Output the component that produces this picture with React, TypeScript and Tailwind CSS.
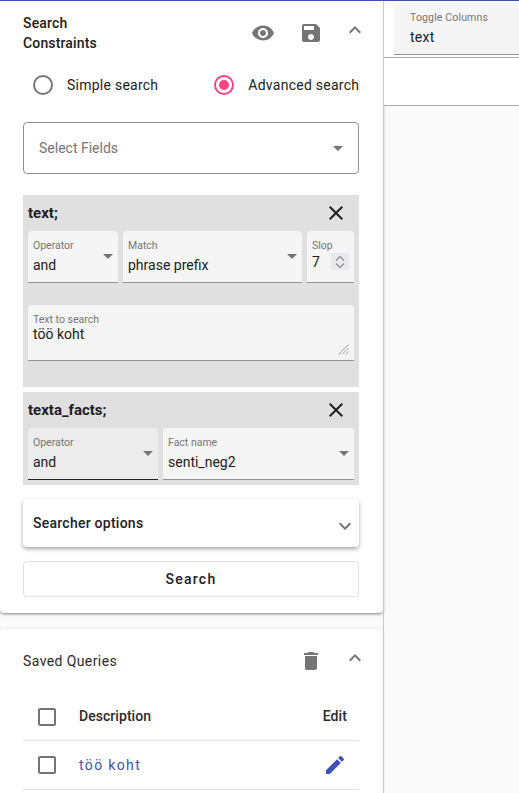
const P = {
  eye: "M12 4.5C7 4.5 2.73 7.61 1 12c1.73 4.39 6 7.5 11 7.5s9.27-3.11 11-7.5c-1.73-4.39-6-7.5-11-7.5zM12 17c-2.76 0-5-2.24-5-5s2.24-5 5-5 5 2.24 5 5-2.24 5-5 5zm0-8c-1.66 0-3 1.34-3 3s1.34 3 3 3 3-1.34 3-3-1.34-3-3-3z",
  save: "M17 3H5c-1.11 0-2 .9-2 2v14c0 1.1.89 2 2 2h14c1.1 0 2-.9 2-2V7l-4-4zm-5 16c-1.66 0-3-1.34-3-3s1.34-3 3-3 3 1.34 3 3-1.34 3-3 3zm3-10H5V5h10v4z",
  less: "M12 8l-6 6 1.41 1.41L12 10.83l4.59 4.58L18 14z",
  more: "M16.59 8.59L12 13.17 7.41 8.59 6 10l6 6 6-6z",
  close: "M19 6.41L17.59 5 12 10.59 6.41 5 5 6.41 10.59 12 5 17.59 6.41 19 12 13.41 17.59 19 19 17.59 13.41 12z",
  del: "M6 19c0 1.1.9 2 2 2h8c1.1 0 2-.9 2-2V7H6v12zM19 4h-3.5l-1-1h-5l-1 1H5v2h14V4z",
  edit: "M3 17.25V21h3.75L17.81 9.94l-3.75-3.75L3 17.25zM20.71 7.04c.39-.39.39-1.02 0-1.41l-2.34-2.34c-.39-.39-1.02-.39-1.41 0l-1.83 1.83 3.75 3.75 1.83-1.83z",
  box: "M19 5v14H5V5h14m0-2H5c-1.1 0-2 .9-2 2v14c0 1.1.9 2 2 2h14c1.1 0 2-.9 2-2V5c0-1.1-.9-2-2-2z",
  drop: "M7 10l5 5 5-5z",
};

function Icon({ d, className }: { d: string; className: string }) {
  return (
    <svg viewBox="0 0 24 24" fill="currentColor" className={className}>
      <path d={d} />
    </svg>
  );
}

function Field({ label, value, w, dark }: { label: string; value: string; w: string; dark?: boolean }) {
  return (
    <div className={`${w} ${dark ? "bg-[#ececec] border-[#212121]" : "bg-[#f5f5f5] border-[#949494]"} relative h-[52px] rounded-t border-b pl-[5px] pt-[9px]`}>
      <div className="text-[10.5px] leading-[12px] text-[#757575]">{label}</div>
      <div className="mt-[2px] text-[14px] leading-[22px] text-[#212121]">{value}</div>
      <Icon d={P.drop} className="absolute right-[-2px] top-[13px] size-[24px] text-[#757575]" />
    </div>
  );
}

export default function App() {
  return (
    <div className="flex h-[793px] overflow-hidden border-t border-[#3f51b5] bg-[#fafafa] font-['Roboto',sans-serif] text-[#212121]">
      <div className="w-[383px] shrink-0">
        <section className="h-[612px] rounded-b bg-white pl-[23px] pr-[24px] shadow-[0_1px_3px_rgba(0,0,0,0.5)]">
          <div className="flex h-[59px] items-start">
            <h2 className="mt-[12px] w-[100px] text-[14px] font-medium leading-[20px] tracking-[0.15px]">Search<br />Constraints</h2>
            <div className="ml-auto mt-[20px] flex text-[#757575]">
              <Icon d={P.eye} className="size-[24px]" />
              <Icon d={P.save} className="ml-[24px] size-[24px]" />
              <Icon d={P.less} className="ml-[20px] mr-[-8px] mt-[-3px] size-[24px]" />
            </div>
          </div>
          <div className="flex h-[50px] items-center whitespace-nowrap pl-[10px] text-[14px] tracking-[0.25px]">
            <span className="size-[20px] shrink-0 rounded-full border-2 border-[#757575]" />
            <span className="ml-[14px]">Simple search</span>
            <span className="ml-[56px] flex size-[20px] shrink-0 items-center justify-center rounded-full border-2 border-[#ff4081]">
              <span className="size-[10px] rounded-full bg-[#ff4081]" />
            </span>
            <span className="ml-[14px]">Advanced search</span>
          </div>
          <div className="mt-[12px] flex h-[52px] items-center justify-between rounded border border-[#8f8f8f] pl-[15px] pr-[8px] text-[14px] text-[#757575]">
            <span className="mt-[1px]">Select Fields</span>
            <Icon d={P.drop} className="size-[24px]" />
          </div>

          <div className="mt-[21px] h-[192px] bg-[#e0e0e0] px-[5px]">
            <div className="flex h-[36px] items-center justify-between">
              <b className="text-[15px] font-bold">text;</b>
              <Icon d={P.close} className="mr-[6px] size-[24px] text-[#212121]" />
            </div>
            <div className="flex gap-[5px]">
              <Field label="Operator" value="and" w="w-[90px]" />
              <Field label="Match" value="phrase prefix" w="w-[179px]" />
              <div className="relative h-[52px] w-[47px] rounded-t border-b border-[#949494] bg-[#f5f5f5] pl-[5px] pt-[9px]">
                <div className="text-[10.5px] leading-[12px] text-[#757575]">Slop</div>
                <div className="mt-[-1px] text-[14px] leading-[22px] text-[#212121]">7</div>
                <div className="absolute right-[5px] top-[22px] flex h-[17px] w-[18px] items-center justify-center bg-[#e9e9ed]">
                  <svg viewBox="0 0 12 16" className="h-[16px] w-[12px] fill-none stroke-[#8a8a8a] stroke-[1.1]">
                    <path d="M2 6.5 6 2.5 10 6.5M2 9.5 6 13.5 10 9.5" />
                  </svg>
                </div>
              </div>
            </div>
            <div className="relative mt-[22px] h-[56px] rounded-t border-b border-[#949494] bg-[#f5f5f5] pl-[5px] pt-[9px]">
              <div className="text-[10.5px] leading-[12px] text-[#757575]">Text to search</div>
              <div className="text-[14px] leading-[17px] text-[#212121]">töö koht</div>
              <svg viewBox="0 0 11 11" className="absolute bottom-[5px] right-[5px] size-[11px] stroke-[#8a8a8a] stroke-[0.8]">
                <path d="M10.5.5.5 10.5M10.5 4 4 10.5M10.5 7.5 7.5 10.5" />
              </svg>
            </div>
          </div>

          <div className="mt-[5px] h-[93px] bg-[#e0e0e0] px-[5px]">
            <div className="flex h-[36px] items-center justify-between">
              <b className="text-[15px] font-bold">texta_facts;</b>
              <Icon d={P.close} className="mr-[6px] size-[24px] text-[#212121]" />
            </div>
            <div className="flex gap-[5px]">
              <Field label="Operator" value="and" w="w-[130px]" dark />
              <Field label="Fact name" value="senti_neg2" w="w-[191px]" />
            </div>
          </div>

          <div className="mt-[14px] flex h-[48px] items-center justify-between rounded bg-white pl-[10px] pr-[2px] shadow-[0_2px_4px_rgba(0,0,0,0.35)]">
            <span className="text-[14px] font-medium tracking-[0.25px]">Searcher options</span>
            <Icon d={P.more} className="mt-[6px] size-[24px] text-[#757575]" />
          </div>
          <button className="mt-[14px] h-[36px] w-full rounded border border-[#e0e0e0] text-[14px] font-medium tracking-[1.25px]">Search</button>
        </section>

        <section className="mt-[16px] h-[164px] rounded-t bg-white pl-[23px] pr-[24px] shadow-[0_0_3px_rgba(0,0,0,0.12)]">
          <div className="flex h-[64px] items-center">
            <h2 className="text-[14px] font-[450] tracking-[0.4px] text-[#2b2b2b]">Saved Queries</h2>
            <div className="ml-auto flex text-[#757575]">
              <Icon d={P.del} className="size-[24px]" />
              <Icon d={P.less} className="ml-[20px] mr-[-8px] mt-[-3px] size-[24px]" />
            </div>
          </div>
          <div className="flex h-[48px] items-center border-b border-[#e0e0e0]">
            <Icon d={P.box} className="ml-[12px] size-[24px] text-[#757575]" />
            <span className="ml-[20px] text-[14px] font-medium tracking-[0.05px] text-[#2b2b2b]">Description</span>
            <span className="ml-auto mr-[12px] text-[14px] font-medium tracking-[0.1px] text-[#2b2b2b]">Edit</span>
          </div>
          <div className="flex h-[49px] items-center border-b border-[#e0e0e0]">
            <Icon d={P.box} className="ml-[12px] size-[24px] text-[#757575]" />
            <span className="ml-[20px] text-[14px] font-[450] tracking-[1.35px] text-[#3f51b5]">töö koht</span>
            <Icon d={P.edit} className="ml-auto mr-[12px] size-[24px] text-[#3f51b5]" />
          </div>
        </section>
      </div>

      <div className="flex-1 border-l border-[#c8c8c8]">
        <div className="h-[57px] border-b border-[#a8a8a8] bg-white pl-[10px] pt-[2px]">
          <div className="h-[52px] rounded-tl border-b border-[#949494] bg-[#f5f5f5] pl-[16px] pt-[9px]">
            <div className="text-[10.5px] leading-[12px] tracking-[0.15px] text-[#757575]">Toggle Columns</div>
            <div className="mt-[2px] text-[14px] leading-[22px] tracking-[0.25px]">text</div>
          </div>
        </div>
        <div className="h-[48px] border-b border-[#a8a8a8] bg-white" />
      </div>
    </div>
  );
}
